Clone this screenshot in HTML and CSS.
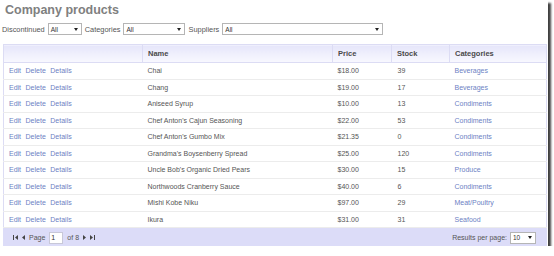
FILE: index.html
```html
<!DOCTYPE html>
<html lang="en">

<head>
    <meta charset="UTF-8">
    <title>Company products</title>
    <link rel="stylesheet" href="styles.css">
</head>

<body>
    <div class="frame">
        <h1>Company products</h1>

        <div class="filters">
            <label>Discontinued</label>
            <span class="select sel-disc"><span>All</span><i class="caret"></i></span>
            <label>Categories</label>
            <span class="select sel-cat"><span>All</span><i class="caret"></i></span>
            <label>Suppliers</label>
            <span class="select sel-sup"><span>All</span><i class="caret"></i></span>
        </div>

        <table class="grid">
            <thead>
                <tr>
                    <th class="c-act"></th>
                    <th class="c-name">Name</th>
                    <th class="c-price">Price</th>
                    <th class="c-stock">Stock</th>
                    <th class="c-cat">Categories</th>
                </tr>
            </thead>
            <tbody>
                <tr><td class="acts"><a>Edit</a><a>Delete</a><a>Details</a></td><td>Chai</td><td>$18.00</td><td class="num">39</td><td><a>Beverages</a></td></tr>
                <tr><td class="acts"><a>Edit</a><a>Delete</a><a>Details</a></td><td>Chang</td><td>$19.00</td><td class="num">17</td><td><a>Beverages</a></td></tr>
                <tr><td class="acts"><a>Edit</a><a>Delete</a><a>Details</a></td><td>Aniseed Syrup</td><td>$10.00</td><td class="num">13</td><td><a>Condiments</a></td></tr>
                <tr><td class="acts"><a>Edit</a><a>Delete</a><a>Details</a></td><td>Chef Anton's Cajun Seasoning</td><td>$22.00</td><td class="num">53</td><td><a>Condiments</a></td></tr>
                <tr><td class="acts"><a>Edit</a><a>Delete</a><a>Details</a></td><td>Chef Anton's Gumbo Mix</td><td>$21.35</td><td class="num">0</td><td><a>Condiments</a></td></tr>
                <tr><td class="acts"><a>Edit</a><a>Delete</a><a>Details</a></td><td>Grandma's Boysenberry Spread</td><td>$25.00</td><td class="num">120</td><td><a>Condiments</a></td></tr>
                <tr><td class="acts"><a>Edit</a><a>Delete</a><a>Details</a></td><td>Uncle Bob's Organic Dried Pears</td><td>$30.00</td><td class="num">15</td><td><a>Produce</a></td></tr>
                <tr><td class="acts"><a>Edit</a><a>Delete</a><a>Details</a></td><td>Northwoods Cranberry Sauce</td><td>$40.00</td><td class="num">6</td><td><a>Condiments</a></td></tr>
                <tr><td class="acts"><a>Edit</a><a>Delete</a><a>Details</a></td><td>Mishi Kobe Niku</td><td>$97.00</td><td class="num">29</td><td><a>Meat/Poultry</a></td></tr>
                <tr><td class="acts"><a>Edit</a><a>Delete</a><a>Details</a></td><td>Ikura</td><td>$31.00</td><td class="num">31</td><td><a>Seafood</a></td></tr>
            </tbody>
        </table>

        <div class="pager">
            <div class="pager-nav">
                <svg class="pg-icon" width="5" height="5" viewBox="0 0 5 5"><rect x="0" y="0" width="1" height="5" fill="#444"/><polygon points="5,0 5,5 2,2.5" fill="#444"/></svg>
                <svg class="pg-icon" width="3" height="5" viewBox="0 0 3 5"><polygon points="3,0 3,5 0,2.5" fill="#444"/></svg>
                <span class="pg-label">Page</span>
                <span class="pg-input">1</span>
                <span class="pg-label">of 8</span>
                <svg class="pg-icon" width="3" height="5" viewBox="0 0 3 5"><polygon points="0,0 0,5 3,2.5" fill="#444"/></svg>
                <svg class="pg-icon" width="5" height="5" viewBox="0 0 5 5"><polygon points="0,0 0,5 3,2.5" fill="#444"/><rect x="4" y="0" width="1" height="5" fill="#444"/></svg>
            </div>
            <div class="pager-size">
                <span>Results per page:</span>
                <span class="select sel-size"><span>10</span><i class="caret"></i></span>
            </div>
        </div>
    </div>
</body>

</html>
```

FILE: styles.css
```css
/* Page */
body {
    margin: 0;
    padding: 0;
    background: #ffffff;
    font-family: "Liberation Sans", Arial, sans-serif;
    font-size: 7px;
    color: #555;
}

.frame {
    width: 548px;
    height: 246px;
    background: #fff;
    box-shadow: 3px 3px 2px rgba(0, 0, 0, 0.75);
    overflow: hidden;
}

h1 {
    margin: 0;
    padding: 3px 0 0 5px;
    height: 18px;
    box-sizing: border-box;
    font-size: 12.5px;
    font-weight: bold;
    color: #808080;
}

/* Filter bar */
.filters {
    display: flex;
    align-items: center;
    height: 14px;
    margin-top: 4px;
    padding-left: 2px;
    font-size: 7.4px;
}

.filters label {
    margin-right: 3px;
}

.select {
    display: inline-flex;
    align-items: center;
    justify-content: space-between;
    height: 12px;
    box-sizing: border-box;
    border: 1px solid #b5b5b5;
    background: #fff;
    padding: 0 3px 0 2px;
    font-size: 6.5px;
    color: #333;
    margin-right: 3px;
}

.caret {
    width: 0;
    height: 0;
    border-left: 2.5px solid transparent;
    border-right: 2.5px solid transparent;
    border-top: 3px solid #222;
}

.sel-disc { width: 34px; }
.sel-cat { width: 62px; }
.sel-sup { width: 161px; }
.sel-size { width: 26px; height: 12px; margin-right: 0; }

/* Grid */
.grid {
    margin: 8px 0 0 3px;
    width: 544px;
    border-collapse: collapse;
    table-layout: fixed;
    border-left: 1px solid #dcdcf4;
    border-right: 1px solid #dcdcf4;
}

.grid th {
    box-sizing: border-box;
    height: 18px;
    padding: 0 5px;
    text-align: left;
    font-size: 7.5px;
    font-weight: bold;
    color: #4a4a4a;
    background: linear-gradient(#e6e6fa, #f8f8ff);
    border: 1px solid #dcdcf4;
}

.c-act { width: 139px; }
.c-name { width: 190px; }
.c-price { width: 59px; }
.c-stock { width: 58px; }

.grid td {
    height: 16.5px;
    padding: 0 5px;
    border-bottom: 1px solid #ececec;
    box-sizing: border-box;
    white-space: nowrap;
}

.grid td.num {
    padding-left: 6px;
}

.grid a {
    color: #6d7fc4;
}

.acts a {
    margin-right: 4.5px;
}

/* Pager */
.pager {
    margin-left: 3px;
    width: 544px;
    height: 19px;
    box-sizing: border-box;
    background: #dcdcf8;
    display: flex;
    align-items: center;
    justify-content: space-between;
    padding: 0 11px 0 10px;
}

.pager-nav {
    display: flex;
    align-items: center;
    gap: 4px;
}

.pg-label {
    color: #555;
}

.pg-input {
    width: 14px;
    height: 12px;
    box-sizing: border-box;
    background: #fff;
    border: 1px solid #c8c8d8;
    padding-left: 1px;
    line-height: 10px;
    color: #333;
}

.pager-size {
    display: flex;
    align-items: center;
    gap: 3px;
}
```
